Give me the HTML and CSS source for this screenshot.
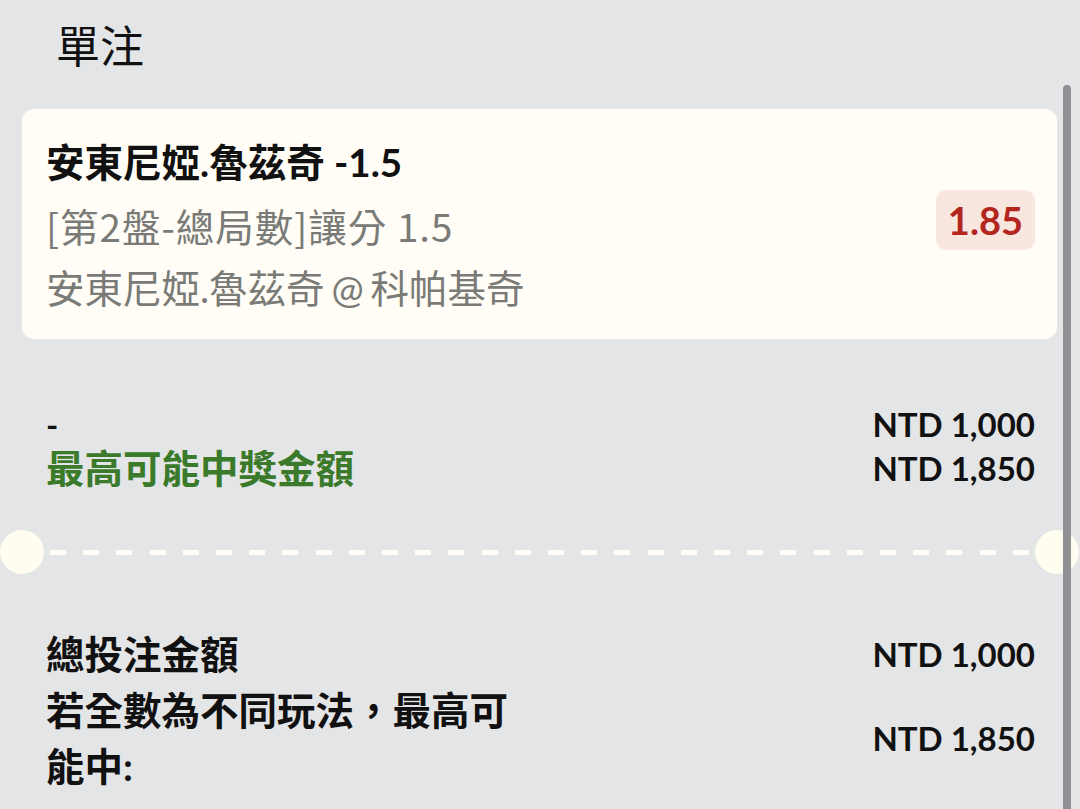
FILE: index.html
```html
<!DOCTYPE html>
<html lang="zh-Hant">
<head>
<meta charset="utf-8">
<title>單注</title>
<link rel="stylesheet" href="styles.css">
</head>
<body>
<div class="page">
  <h1 class="title">單注</h1>

  <div class="card">
    <div class="card-info">
      <div class="sel">安東尼婭.魯茲奇 -1.5</div>
      <div class="sub market">[第2盤-總局數]讓分 1.5</div>
      <div class="sub teams">安東尼婭.魯茲奇 @ 科帕基奇</div>
    </div>
    <div class="odds">1.85</div>
  </div>

  <div class="summary">
    <div class="row">
      <div class="label dash">-</div>
      <div class="value">NTD 1,000</div>
    </div>
    <div class="row">
      <div class="label green">最高可能中獎金額</div>
      <div class="value">NTD 1,850</div>
    </div>
  </div>

  <div class="divider">
    <span class="hole"></span>
    <span class="dashes"></span>
    <span class="hole"></span>
  </div>

  <div class="totals">
    <div class="row">
      <div class="label">總投注金額</div>
      <div class="value">NTD 1,000</div>
    </div>
    <div class="row">
      <div class="label">若全數為不同玩法，最高可能中:</div>
      <div class="value">NTD 1,850</div>
    </div>
  </div>
</div>
<div class="scrollbar"></div>
</body>
</html>
```

FILE: styles.css
```css
html, body {
  margin: 0;
  padding: 0;
}
body {
  background: #e4e5e7;
  font-family: "Lato", "Noto Sans CJK TC", sans-serif;
  color: #111;
  width: 1080px;
  height: 809px;
  overflow: hidden;
}
.page {
  padding: 0 23px 0 22px;
}
.title {
  margin: 0;
  padding-left: 34px;
  height: 88px;
  line-height: 88px;
  font-size: 44px;
  font-weight: 400;
  font-family: "Noto Sans CJK TC", sans-serif;
}
.card {
  margin-top: 21px;
  background: #fffdf5;
  border-radius: 12px;
  padding: 22px 22px 19px 24px;
  display: flex;
  align-items: center;
  justify-content: space-between;
}
.card-info {
  font-size: 38.5px;
  line-height: 63px;
}
.sel {
  font-weight: 700;
  color: #111;
}
.sub {
  color: #7a7a77;
}
.market {
  font-family: "Noto Sans CJK TC", sans-serif;
  letter-spacing: 1px;
}
.teams {
  word-spacing: -3px;
}
.odds {
  margin-bottom: 11px;
  background: #f8e6df;
  color: #b3261e;
  font-weight: 700;
  font-size: 38px;
  line-height: 60px;
  padding: 0 12px;
  border-radius: 10px;
}
.summary {
  margin-top: 63px;
  padding: 0 22px 0 24px;
}
.summary .row {
  line-height: 44px;
}
.row {
  display: flex;
  justify-content: space-between;
  align-items: center;
}
.label {
  max-width: 50%;
  font-size: 38.5px;
  font-weight: 700;
}
.dash {
  font-size: 33px;
}
.green {
  color: #3a7a2a;
}
.value {
  font-size: 33px;
  font-weight: 700;
  white-space: nowrap;
}
.divider {
  margin: 40px -22px 0 -22px;
  height: 44px;
  display: flex;
  align-items: center;
}
.hole {
  flex: 0 0 44px;
  height: 44px;
  border-radius: 50%;
  background: #fffdf0;
}
.dashes {
  flex: 1;
  margin: 0 5px 0 6px;
  height: 5px;
  background: repeating-linear-gradient(to right, #fffdf5 0 16px, transparent 16px 33.2px);
}
.totals {
  margin-top: 52px;
  padding: 0 22px 0 24px;
}
.totals .row {
  line-height: 56px;
}
.scrollbar {
  position: absolute;
  top: 85px;
  right: 9px;
  bottom: -10px;
  width: 8px;
  border-radius: 4px;
  background: #8f8f94;
}
```
